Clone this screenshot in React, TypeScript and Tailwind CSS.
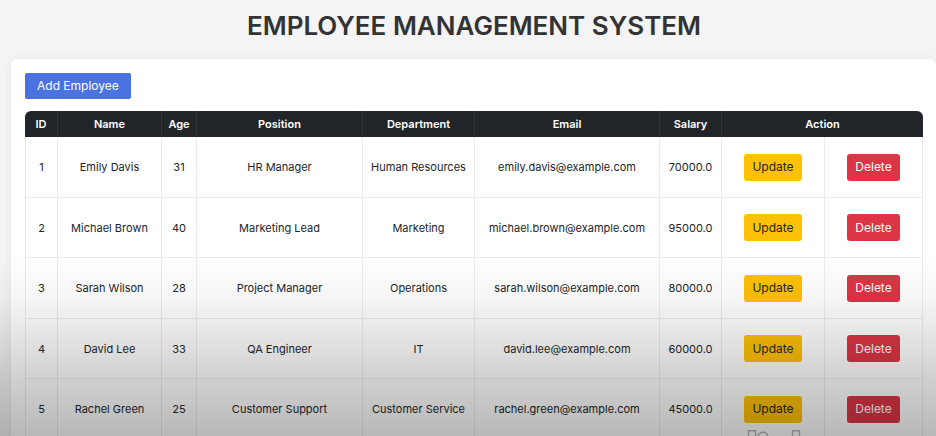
type Employee = {
  id: number;
  name: string;
  age: number;
  position: string;
  department: string;
  email: string;
  salary: string;
};

const employees: Employee[] = [
  { id: 1, name: "Emily Davis", age: 31, position: "HR Manager", department: "Human Resources", email: "emily.davis@example.com", salary: "70000.0" },
  { id: 2, name: "Michael Brown", age: 40, position: "Marketing Lead", department: "Marketing", email: "michael.brown@example.com", salary: "95000.0" },
  { id: 3, name: "Sarah Wilson", age: 28, position: "Project Manager", department: "Operations", email: "sarah.wilson@example.com", salary: "80000.0" },
  { id: 4, name: "David Lee", age: 33, position: "QA Engineer", department: "IT", email: "david.lee@example.com", salary: "60000.0" },
  { id: 5, name: "Rachel Green", age: 25, position: "Customer Support", department: "Customer Service", email: "rachel.green@example.com", salary: "45000.0" },
];

const headings = ["ID", "Name", "Age", "Position", "Department", "Email", "Salary"];

function EmployeeRow({ employee }: { employee: Employee }) {
  const cell = "border-r border-b border-[#eaebed] first:border-l";
  return (
    <tr className="h-[61px] even:h-[60px]">
      <td className={cell}>{employee.id}</td>
      <td className={cell}>{employee.name}</td>
      <td className={cell}>{employee.age}</td>
      <td className={cell}>{employee.position}</td>
      <td className={cell}>{employee.department}</td>
      <td className={cell}>{employee.email}</td>
      <td className={cell}>{employee.salary}</td>
      <td className={cell}>
        <button type="button" className="h-[27px] rounded-[3px] bg-[#ffc107] px-2 text-[12px] leading-4 text-[#212529]">
          Update
        </button>
      </td>
      <td className={cell}>
        <button type="button" className="h-[27px] rounded-[3px] bg-[#dc3545] px-2 text-[12px] leading-4 text-white">
          Delete
        </button>
      </td>
    </tr>
  );
}

export default function App() {
  return (
    <main className="relative h-screen overflow-hidden bg-[#f4f4f4] font-['Inter',sans-serif] text-[#212529]">
      <h1 className="py-2 pl-3 text-center text-[26px] leading-[35px] font-semibold text-[#333333]">
        EMPLOYEE MANAGEMENT SYSTEM
      </h1>

      <section className="mt-2 ml-[11px] rounded-md bg-white p-[14px] shadow-[0_0_8px_rgba(0,0,0,0.06)]">
        <button type="button" className="block h-[26px] rounded-[2px] bg-[#4a72e0] px-3 text-[12px] leading-4 text-white">
          Add Employee
        </button>

        <table className="mt-3 w-full table-fixed border-separate border-spacing-0 text-center text-[11px] leading-4">
          <colgroup>
            <col className="w-[33px]" />
            <col className="w-[104px]" />
            <col className="w-[35px]" />
            <col className="w-[166px]" />
            <col className="w-[112px]" />
            <col className="w-[185px]" />
            <col className="w-[62px]" />
            <col className="w-[103px]" />
            <col className="w-[98px]" />
          </colgroup>
          <thead>
            <tr className="h-[26px] text-white">
              {headings.map((heading) => (
                <th key={heading} scope="col" className="border-r border-[#2f3439] bg-[#212529] font-semibold first:rounded-tl-md">
                  {heading}
                </th>
              ))}
              <th scope="colgroup" colSpan={2} className="rounded-tr-md bg-[#212529] font-semibold">
                Action
              </th>
            </tr>
          </thead>
          <tbody>
            {employees.map((employee) => (
              <EmployeeRow key={employee.id} employee={employee} />
            ))}
          </tbody>
        </table>
      </section>

      {/* Shade that deepens towards the bottom edge, with the tops of the corner marks */}
      <div className="pointer-events-none absolute inset-x-0 bottom-0 h-[180px] bg-[linear-gradient(to_bottom,rgba(0,0,0,0)_0%,rgba(0,0,0,0.04)_24%,rgba(0,0,0,0.13)_52%,rgba(0,0,0,0.19)_69%,rgba(0,0,0,0.28)_100%)]" />
      <svg
        aria-hidden="true"
        className="pointer-events-none absolute right-[134px] bottom-0"
        width="56"
        height="6"
        viewBox="0 0 56 6"
        fill="none"
        stroke="#858585"
        strokeWidth="1.4"
      >
        <path d="M2.5 6V.8H9.500V6M12 6C14 1 20 1 22 6M46.500 6V.8H53.500V6" />
      </svg>
    </main>
  );
}
